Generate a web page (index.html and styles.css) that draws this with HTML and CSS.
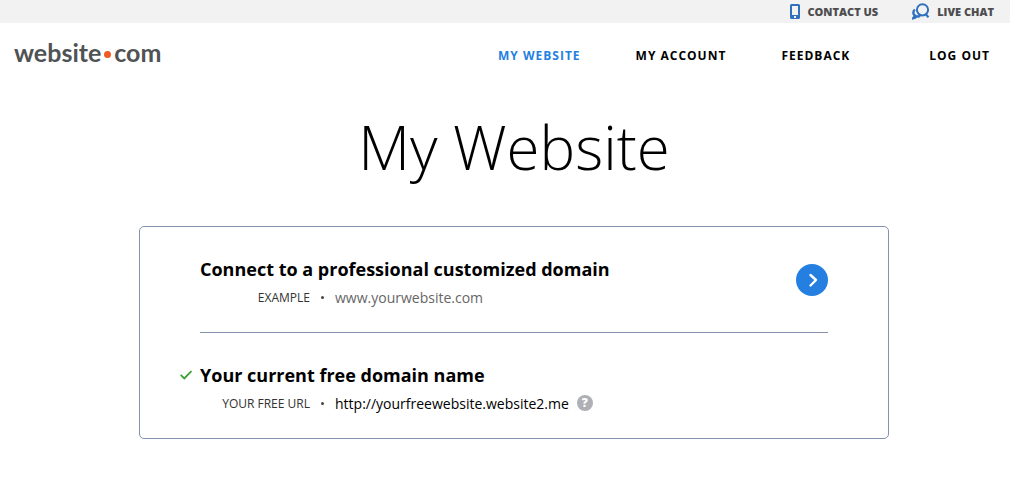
FILE: index.html
```html
<!DOCTYPE html>
<html lang="en">
<head>
  <meta charset="utf-8">
  <meta name="viewport" content="width=device-width">
  <title>My Website</title>
  <link rel="stylesheet" href="styles.css">
</head>
<body>
  <div class="topbar">
    <a class="topbar-link" href="#contact">
      <svg width="10" height="15" viewBox="0 0 10 15">
        <path fill="#3070bd" fill-rule="evenodd" d="M1.500 0h7A1.500 1.500 0 0 1 10 1.500v12A1.500 1.500 0 0 1 8.500 15h-7A1.500 1.500 0 0 1 0 13.500v-12A1.500 1.500 0 0 1 1.500 0zM2 2v9h6V2zM4 12v2h2v-2z"/>
      </svg>
      Contact us
    </a>
    <a class="topbar-link" href="#chat">
      <svg width="18" height="17" viewBox="0 0 18 17" fill="none" stroke="#3070bd">
        <circle cx="10.500" cy="6.800" r="5.600" stroke-width="2"/>
        <path stroke-width="2.200" d="M13.500 11l3 3.200"/>
        <path stroke-width="2.400" d="M2.800 6.500C.8 8.500.8 11 2.900 12.500c-.4 1-.9 2-1.900 2.900 1.500-.1 2.800-.8 3.700-2 1.300.2 2.500 0 3.500-.5"/>
      </svg>
      Live chat
    </a>
  </div>

  <header class="header">
    <a class="logo" href="#home">website<span class="logo-dot"></span>com</a>
    <nav class="nav">
      <a class="active" href="#website">My website</a>
      <a href="#account">My account</a>
      <a href="#feedback">Feedback</a>
      <a class="logout" href="#logout">Log out</a>
    </nav>
  </header>

  <main class="main">
    <h1>My Website</h1>
    <div class="card">
      <section class="domain">
        <div class="domain-text">
          <h2>Connect to a professional customized domain</h2>
          <div class="detail">
            <span class="detail-label">EXAMPLE</span>
            <span class="bullet"></span>
            <span class="example">www.yourwebsite.com</span>
          </div>
        </div>
        <button class="go" type="button" aria-label="Connect domain">
          <svg width="32" height="32" viewBox="0 0 32 32" fill="none" stroke="#fff" stroke-width="2.400" stroke-linecap="round" stroke-linejoin="round">
            <path d="M14.500 11l5.500 5-5.500 5.500"/>
          </svg>
        </button>
      </section>
      <section class="domain">
        <div class="domain-text">
          <div class="title-row">
            <svg width="12" height="10" viewBox="0 0 12 10" fill="none" stroke="#3aa232" stroke-width="1.800">
              <path d="M.7 4.800l3.600 3.600L11.400 1"/>
            </svg>
            <h2>Your current free domain name</h2>
          </div>
          <div class="detail">
            <span class="detail-label">YOUR FREE URL</span>
            <span class="bullet"></span>
            <a class="url" href="http://yourfreewebsite.website2.me">http://yourfreewebsite.website2.me</a>
            <button class="help" type="button" aria-label="Help">?</button>
          </div>
        </div>
      </section>
    </div>
  </main>
</body>
</html>
```

FILE: styles.css
```css
* {
  box-sizing: border-box;
}
body {
  margin: 0;
  color: #000;
  background: #fff;
  font-family: "Open Sans", sans-serif;
}
a {
  color: inherit;
  text-decoration: none;
}
h1, h2 {
  margin: 0;
}
svg {
  display: block;
  flex-shrink: 0;
}
button {
  padding: 0;
  border: none;
  border-radius: 50%;
  font-family: inherit;
  cursor: pointer;
}

.topbar {
  display: flex;
  justify-content: flex-end;
  gap: 34px;
  height: 23px;
  padding-right: 16px;
  background: #f2f2f2;
}
.topbar-link {
  display: flex;
  align-items: center;
  gap: 7px;
  height: 22px;
  color: #4d4d4f;
  font-size: 11px;
  font-weight: 800;
  text-transform: uppercase;
}

.header {
  display: flex;
  justify-content: space-between;
  align-items: center;
  height: 64px;
  padding: 0 20px 0 14px;
}
.logo {
  display: flex;
  align-items: center;
  padding-bottom: 6px;
  color: #505254;
  font-family: Lato, sans-serif;
  font-size: 25px;
  font-weight: 700;
}
.logo-dot {
  width: 7px;
  height: 7px;
  margin: 4px 3px 0;
  border-radius: 50%;
  background: #f15a22;
}
.nav {
  display: flex;
  gap: 55px;
  font-size: 12px;
  font-weight: 700;
  letter-spacing: 1px;
  text-transform: uppercase;
}
.nav .active {
  color: #247fe1;
}
.logout {
  margin-left: 24px;
}

.main {
  padding: 16px 0 40px 18px;
}
h1 {
  font-size: 60px;
  font-weight: 300;
  line-height: 88px;
  text-align: center;
}
.card {
  max-width: 750px;
  margin: 35px auto 0;
  padding: 0 60px;
  border: 1px solid #8492ae;
  border-radius: 5px;
}
.domain {
  display: flex;
  justify-content: space-between;
  align-items: center;
  height: 105px;
}
.domain + .domain {
  height: 106px;
  border-top: 1px solid #8492ae;
}
.domain-text {
  padding-top: 7px;
}
.title-row {
  display: flex;
  align-items: center;
  gap: 8px;
  margin-left: -20px;
}
h2 {
  font-size: 18px;
  font-weight: 700;
  line-height: 28px;
}
.detail {
  display: flex;
  align-items: center;
  height: 28px;
  font-size: 14px;
}
.detail-label {
  width: 110px;
  color: #333;
  font-size: 12px;
  text-align: right;
}
.bullet {
  width: 3px;
  height: 3px;
  margin: 0 11px;
  border-radius: 50%;
  background: #444;
}
.example {
  color: #666;
}
.go {
  width: 32px;
  height: 32px;
  background: #247fe1;
}
.help {
  width: 16px;
  height: 16px;
  margin-left: 8px;
  color: #fff;
  background: #aeb0b5;
  font-size: 12px;
  font-weight: 800;
  line-height: 16px;
}
```
